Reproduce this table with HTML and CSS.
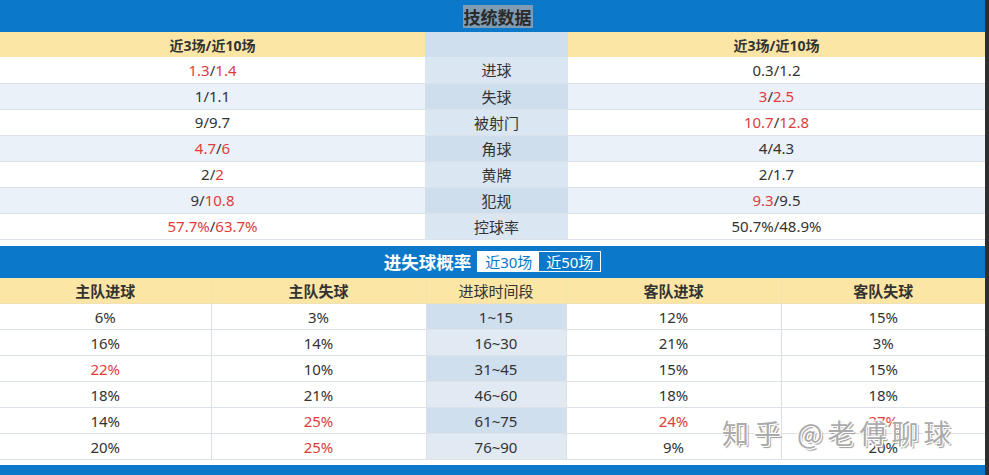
FILE: index.html
```html
<!DOCTYPE html>
<html lang="zh">
<head>
<meta charset="utf-8">
<link rel="stylesheet" href="styles.css">
</head>
<body>
<div class="page">
  <div class="main">
    <div class="bar"><span class="title-sel">技统数据</span></div>
    <table class="tbl t1">
      <colgroup><col style="width:425px"><col style="width:143px"><col></colgroup>
      <thead>
        <tr><th>近3场/近10场</th><th class="mid"></th><th>近3场/近10场</th></tr>
      </thead>
      <tbody>
        <tr><td><span class="r">1.3</span>/<span class="r">1.4</span></td><td class="mid">进球</td><td>0.3/1.2</td></tr>
        <tr><td>1/1.1</td><td class="mid">失球</td><td><span class="r">3</span>/<span class="r">2.5</span></td></tr>
        <tr><td>9/9.7</td><td class="mid">被射门</td><td><span class="r">10.7</span>/<span class="r">12.8</span></td></tr>
        <tr><td><span class="r">4.7</span>/<span class="r">6</span></td><td class="mid">角球</td><td>4/4.3</td></tr>
        <tr><td>2/<span class="r">2</span></td><td class="mid">黄牌</td><td>2/1.7</td></tr>
        <tr><td>9/<span class="r">10.8</span></td><td class="mid">犯规</td><td><span class="r">9.3</span>/9.5</td></tr>
        <tr><td><span class="r">57.7%</span>/<span class="r">63.7%</span></td><td class="mid">控球率</td><td>50.7%/48.9%</td></tr>
      </tbody>
    </table>
    <div class="bar bar2">
      <span class="title2">进失球概率</span>
      <span class="tabs"><span class="tab on">近30场</span><span class="tab">近50场</span></span>
    </div>
    <table class="tbl t2">
      <colgroup><col style="width:211px"><col style="width:215px"><col style="width:140px"><col style="width:215px"><col></colgroup>
      <thead>
        <tr><th>主队进球</th><th>主队失球</th><th class="reg">进球时间段</th><th>客队进球</th><th>客队失球</th></tr>
      </thead>
      <tbody>
        <tr><td>6%</td><td>3%</td><td class="mid">1~15</td><td>12%</td><td>15%</td></tr>
        <tr><td>16%</td><td>14%</td><td class="mid">16~30</td><td>21%</td><td>3%</td></tr>
        <tr><td class="r">22%</td><td>10%</td><td class="mid">31~45</td><td>15%</td><td>15%</td></tr>
        <tr><td>18%</td><td>21%</td><td class="mid">46~60</td><td>18%</td><td>18%</td></tr>
        <tr><td>14%</td><td class="r">25%</td><td class="mid">61~75</td><td class="r">24%</td><td class="r">27%</td></tr>
        <tr><td>20%</td><td class="r">25%</td><td class="mid">76~90</td><td>9%</td><td>20%</td></tr>
      </tbody>
    </table>
    <div class="bar bar3"></div>
    <div class="watermark">知乎 @老傅聊球</div>
  </div>
  <div class="edge"></div>
</div>
</body>
</html>
```
FILE: styles.css
```css
* { box-sizing: border-box; }
html, body { margin: 0; padding: 0; }
body {
  width: 989px;
  height: 475px;
  overflow: hidden;
  background: #fff;
  font-family: "Noto Sans", "Noto Sans CJK SC", sans-serif;
  color: #333;
}
.page { display: flex; height: 475px; }
.main { width: 985px; position: relative; }
.edge { flex: 1; background: #2e2e2e; }

.bar {
  height: 32px;
  background: #0c78c9;
  display: flex;
  align-items: center;
  justify-content: center;
}
.title-sel {
  background: #7f9cb4;
  color: #2a2a2a;
  font-weight: bold;
  font-size: 17px;
  line-height: 23px;
  padding: 0 1px;
  margin-left: 10px;
  font-family: "Noto Sans CJK SC", sans-serif;
}

.tbl {
  width: 985px;
  border-collapse: collapse;
  table-layout: fixed;
  font-size: 15px;
}
.tbl th, .tbl td {
  text-align: center;
  padding: 0;
  white-space: nowrap;
  font-family: "Noto Sans", "Noto Sans CJK SC", sans-serif;
}
.tbl th {
  height: 25px;
  background: #fbe6a6;
  font-weight: bold;
  font-size: 14px;
  color: #333;
}
.tbl td {
  height: 26px;
  border-bottom: 1px solid #dde2e8;
  color: #333;
}
.t1 th.mid { background: #cfdfed; }
.t1 tbody tr:nth-child(even) td { background: #eaf1f8; }
.t1 tbody tr:nth-child(odd) td.mid { background: #dae6f1; }
.t1 tbody tr:nth-child(even) td.mid { background: #cfdeec; }
.t1 { margin-bottom: 6px; }

.r { color: #e03c3c; }
td.r { color: #e03c3c; }

.bar2 { gap: 6px; }
.title2 {
  color: #fff;
  font-weight: bold;
  font-size: 17.5px;
  font-family: "Noto Sans CJK SC", sans-serif;
}
.tabs {
  display: flex;
  border: 1px solid #fff;
  height: 21px;
}
.tab {
  width: 61px;
  display: flex;
  align-items: center;
  justify-content: center;
  color: #fff;
  font-size: 15px;
  font-family: "Noto Sans", "Noto Sans CJK SC", sans-serif;
}
.tab.on { background: #fff; color: #0c78c9; }

.t2 th {
  height: 26px;
  font-size: 15px;
  border-right: 1px solid #f3e2b0;
  border-bottom: 1px solid #efe0b6;
}
.t2 th.reg { font-weight: normal; }
.t2 td { border-right: 1px solid #dcdfe3; }
.t2 th:last-child, .t2 td:last-child { border-right: none; }
.t2 tbody tr:nth-child(odd) td.mid { background: #cfdfed; }
.t2 tbody tr:nth-child(even) td.mid { background: #e1eaf3; }
.t2 { margin-bottom: 5px; }

.bar3 { height: 20px; }

.watermark {
  position: absolute;
  left: 722px;
  top: 413px;
  font-size: 27px;
  color: #ababab;
  letter-spacing: 5px;
  text-shadow: 1px 1px 0 #fff, -1px -1px 0 #fff, 1px -1px 0 #fff, -1px 1px 0 #fff, 2px 2px 1px #9a9a9a;
  font-family: "Noto Sans CJK SC", sans-serif;
  white-space: nowrap;
}
```
